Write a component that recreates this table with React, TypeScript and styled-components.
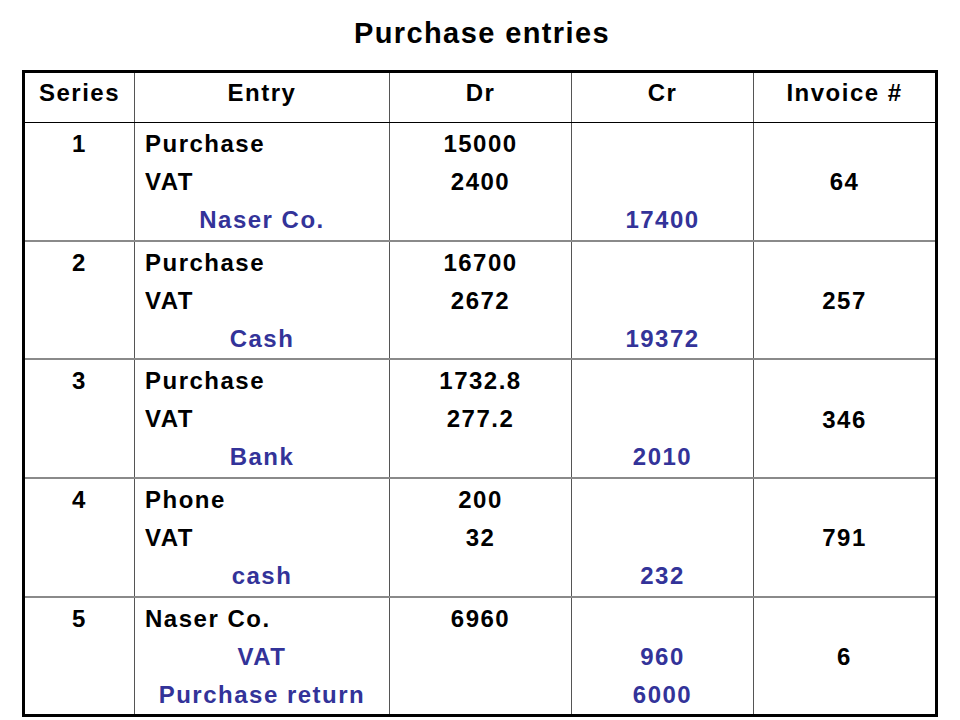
import React from "react";
import styled, { createGlobalStyle } from "styled-components";

const Global = createGlobalStyle`
  html, body { margin: 0; padding: 0; background: #ffffff; }
  body { font-family: "Liberation Sans", Arial, sans-serif; color: #000; }
`;

const Page = styled.div`
  width: 960px;
  height: 720px;
  overflow: hidden;
  display: flex;
  flex-direction: column;
  align-items: flex-start;
`;

const Title = styled.h1`
  align-self: stretch;
  margin: 15px 0 0 0;
  height: 36px;
  line-height: 36px;
  font-size: 29px;
  font-weight: bold;
  letter-spacing: 1.4px;
  text-align: center;
  padding-left: 4px;
`;

const Table = styled.table`
  margin: 19px 0 0 22px;
  width: 913px;
  table-layout: fixed;
  border-collapse: collapse;
  border: 3px solid #000;
  font-size: 24px;
  font-weight: bold;
  letter-spacing: 1.5px;
`;

const HeadCell = styled.th`
  padding: 1px 0 10px 0;
  line-height: 38px;
  vertical-align: top;
  text-align: center;
  font-weight: bold;
  border-left: 1px solid #555;
  border-bottom: 1px solid #000;
  &:first-child { border-left: none; }
`;

const Row = styled.tr`
  & + & > td { border-top: 2px solid #8a8a8a; }
`;

const Cell = styled.td<{ $middle?: boolean }>`
  height: 114.7px;
  padding: 2px 0 0 0;
  vertical-align: ${(p) => (p.$middle ? "middle" : "top")};
  border-left: 1px solid #555;
  text-align: center;
  &:first-child { border-left: none; }
`;

const Line = styled.div<{ $blue?: boolean; $left?: boolean }>`
  height: 38px;
  line-height: 38px;
  white-space: nowrap;
  color: ${(p) => (p.$blue ? "#333399" : "#000")};
  text-align: ${(p) => (p.$left ? "left" : "center")};
  padding-left: ${(p) => (p.$left ? "10px" : "0")};
`;

type Entry = { text: string; credit?: boolean };
type Rec = {
  series: string;
  entries: Entry[];
  dr: string[];
  cr: string[];
  invoice: string;
};

const data: Rec[] = [
  {
    series: "1",
    entries: [{ text: "Purchase" }, { text: "VAT" }, { text: "Naser Co.", credit: true }],
    dr: ["15000", "2400"],
    cr: ["", "", "17400"],
    invoice: "64",
  },
  {
    series: "2",
    entries: [{ text: "Purchase" }, { text: "VAT" }, { text: "Cash", credit: true }],
    dr: ["16700", "2672"],
    cr: ["", "", "19372"],
    invoice: "257",
  },
  {
    series: "3",
    entries: [{ text: "Purchase" }, { text: "VAT" }, { text: "Bank", credit: true }],
    dr: ["1732.8", "277.2"],
    cr: ["", "", "2010"],
    invoice: "346",
  },
  {
    series: "4",
    entries: [{ text: "Phone" }, { text: "VAT" }, { text: "cash", credit: true }],
    dr: ["200", "32"],
    cr: ["", "", "232"],
    invoice: "791",
  },
  {
    series: "5",
    entries: [
      { text: "Naser Co." },
      { text: "VAT", credit: true },
      { text: "Purchase return", credit: true },
    ],
    dr: ["6960"],
    cr: ["", "960", "6000"],
    invoice: "6",
  },
];

export default function App() {
  return (
    <Page>
      <Global />
      <Title>Purchase entries</Title>
      <Table>
        <colgroup>
          <col style={{ width: 111 }} />
          <col style={{ width: 255 }} />
          <col style={{ width: 182 }} />
          <col style={{ width: 182 }} />
          <col style={{ width: 183 }} />
        </colgroup>
        <thead>
          <tr>
            <HeadCell>Series</HeadCell>
            <HeadCell>Entry</HeadCell>
            <HeadCell>Dr</HeadCell>
            <HeadCell>Cr</HeadCell>
            <HeadCell>Invoice #</HeadCell>
          </tr>
        </thead>
        <tbody>
          {data.map((r) => (
            <Row key={r.series}>
              <Cell>
                <Line>{r.series}</Line>
              </Cell>
              <Cell>
                {r.entries.map((e, i) => (
                  <Line key={i} $blue={e.credit} $left={!e.credit}>
                    {e.text}
                  </Line>
                ))}
              </Cell>
              <Cell>
                {r.dr.map((v, i) => (
                  <Line key={i}>{v}</Line>
                ))}
              </Cell>
              <Cell>
                {r.cr.map((v, i) => (
                  <Line key={i} $blue>
                    {v}
                  </Line>
                ))}
              </Cell>
              <Cell $middle>
                <Line>{r.invoice}</Line>
              </Cell>
            </Row>
          ))}
        </tbody>
      </Table>
    </Page>
  );
}
